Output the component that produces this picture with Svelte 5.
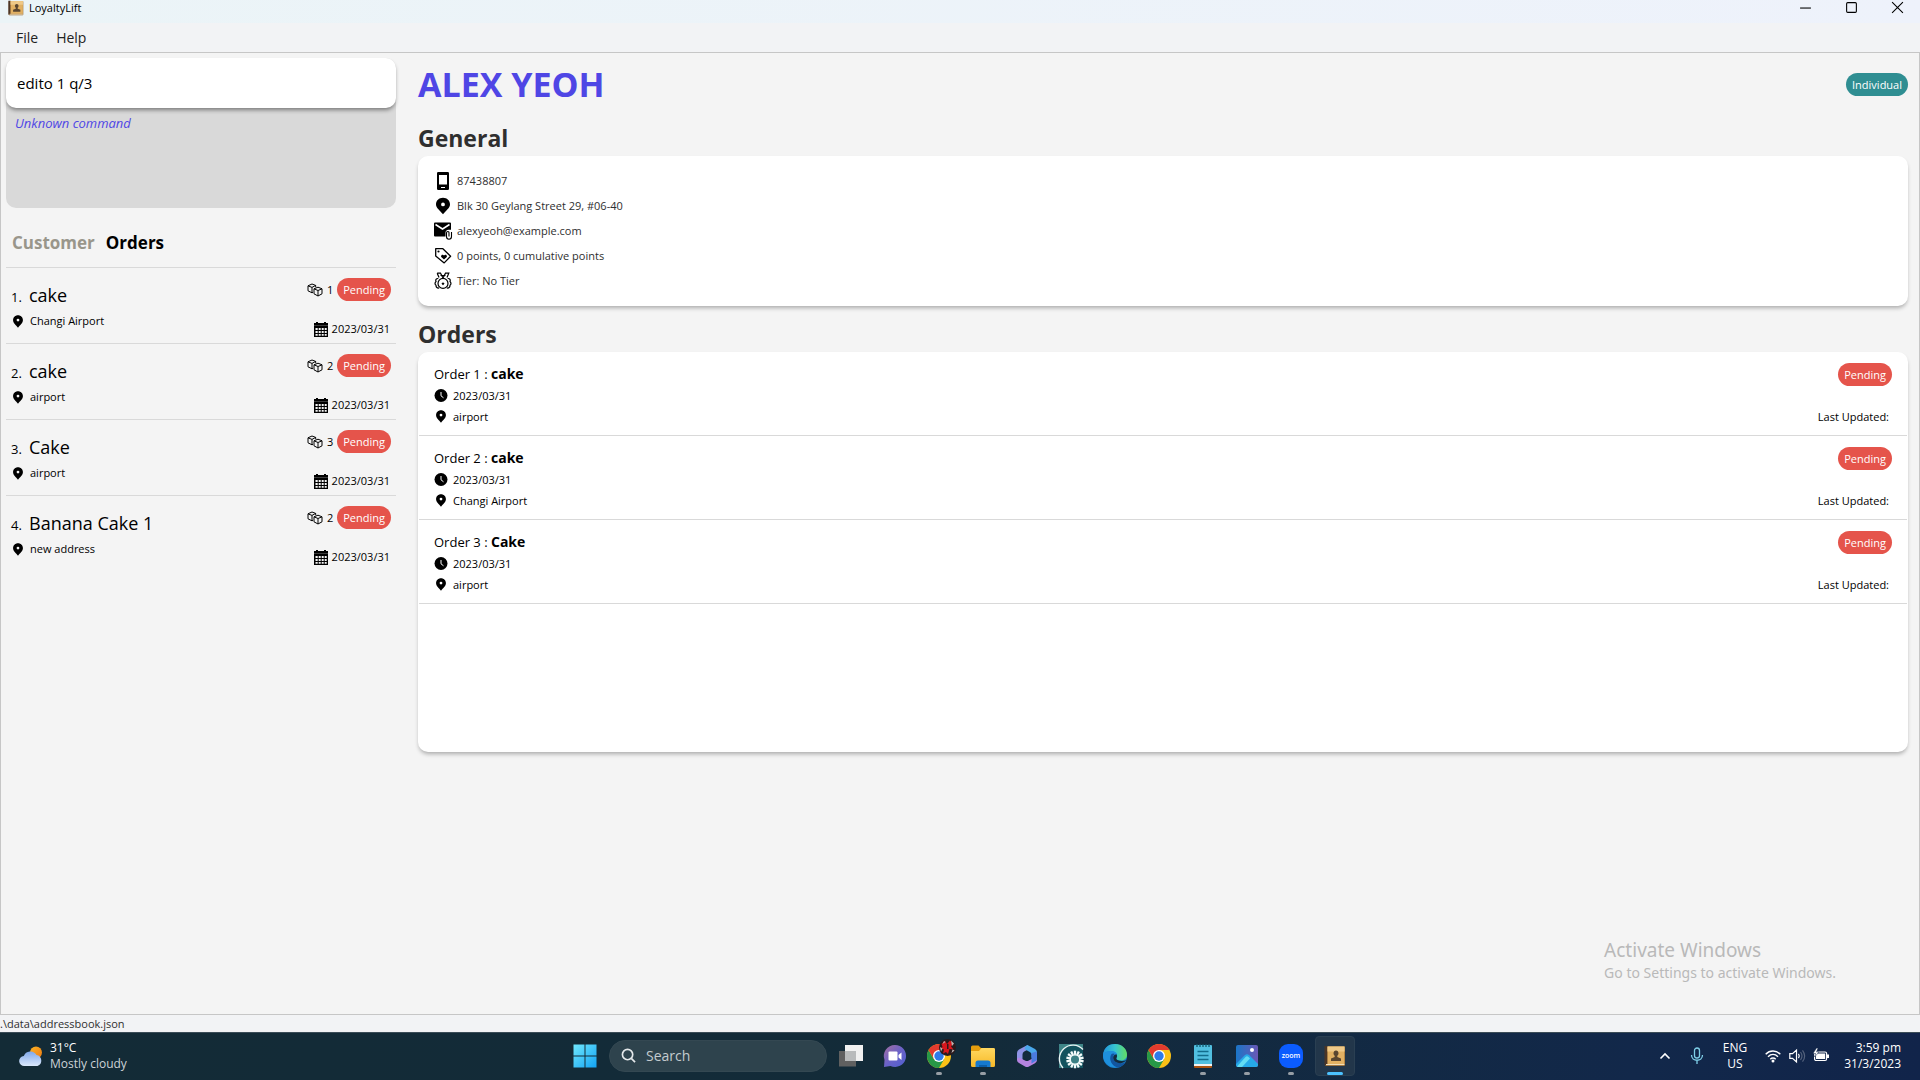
<script>
  const orders = [
    { name: 'cake', address: 'Changi Airport', qty: 1, date: '2023/03/31' },
    { name: 'cake', address: 'airport', qty: 2, date: '2023/03/31' },
    { name: 'Cake', address: 'airport', qty: 3, date: '2023/03/31' },
    { name: 'Banana Cake 1', address: 'new address', qty: 2, date: '2023/03/31' }
  ];
  const customerOrders = [
    { name: 'cake', address: 'airport', date: '2023/03/31' },
    { name: 'cake', address: 'Changi Airport', date: '2023/03/31' },
    { name: 'Cake', address: 'airport', date: '2023/03/31' }
  ];
  const details = [
    { icon: 'phone', text: '87438807' },
    { icon: 'pin', text: 'Blk 30 Geylang Street 29, #06-40' },
    { icon: 'mail', text: 'alexyeoh@example.com' },
    { icon: 'tag', text: '0 points, 0 cumulative points' },
    { icon: 'medal', text: 'Tier: No Tier' }
  ];
  const apps = [
    { id: 'taskview', label: 'Task view' },
    { id: 'chat', label: 'Chat' },
    { id: 'chrome-profile', label: 'Google Chrome profile', state: 'open' },
    { id: 'explorer', label: 'File Explorer', state: 'open' },
    { id: 'm365', label: 'Microsoft 365' },
    { id: 'gear', label: 'Device utility' },
    { id: 'edge', label: 'Microsoft Edge' },
    { id: 'chrome', label: 'Google Chrome' },
    { id: 'notepad', label: 'Notepad', state: 'open' },
    { id: 'photos', label: 'Photos', state: 'open' },
    { id: 'zoom', label: 'Zoom', state: 'open' },
    { id: 'book', label: 'LoyaltyLift', state: 'active' }
  ];
  const spokes = Array.from({ length: 14 }, (_, i) => (i * 360) / 14);
  let command = $state('edito 1 q/3');
</script>

{#snippet pin()}
  <svg class="pin" viewBox="0 0 12 14" aria-hidden="true">
    <path fill-rule="evenodd" d="M6 .4C2.9.4.7 2.7.7 5.6c0 3.2 3.1 5.1 5.3 8 2.2-2.9 5.3-4.8 5.3-8C11.3 2.7 9.1.4 6 .4ZM6 4a1.500 1.500 0 1 1 0 3 1.500 1.500 0 0 1 0-3Z" />
  </svg>
{/snippet}

{#snippet book()}
  <svg viewBox="0 0 22 22" aria-hidden="true">
    <rect x="1" y="1.5" width="20" height="19.5" rx="1" fill="#8a5a24" />
    <rect x="0.5" y="1" width="3" height="19" fill="#4a3526" />
    <rect x="3.5" y="1.5" width="17" height="17.5" fill="#e2b163" />
    <rect x="3.5" y="1.5" width="17" height="5" fill="#efc988" />
    <rect x="2" y="19" width="18.5" height="1.2" fill="#f1dfb9" />
    <path d="M12 5.500c1.500 0 2.500 1.200 2.500 2.700 0 1.100-.5 2-1.200 2.600v1.200l3.700 1.500v2.500H7v-2.500l3.700-1.500v-1.200c-.7-.6-1.200-1.500-1.200-2.600 0-1.500 1-2.700 2.500-2.700Z" fill="#5a4630" />
  </svg>
{/snippet}

{#snippet chromeMark()}
  <circle cx="12" cy="12" r="12" fill="#fbc116" />
  <path d="M1.600 6A12 12 0 0 0 12 24l5.200-9L12 12 6.800 15Z" fill="#279847" />
  <path d="M12 6h10.400A12 12 0 0 0 1.600 6l5.200 9Z" fill="#e33b2e" />
  <circle cx="12" cy="12" r="6" fill="#fff" />
  <circle cx="12" cy="12" r="4.700" fill="#2f7bea" />
{/snippet}

{#snippet detailIcon(id)}
  <svg class="detail-icon" viewBox="0 0 18 18" aria-hidden="true">
    {#if id === 'phone'}
      <path fill-rule="evenodd" d="M4.200 0h9.600Q15 0 15 1.200v15.600q0 1.200-1.200 1.200H4.200Q3 18 3 16.800V1.200Q3 0 4.200 0ZM5 3v9.500h8V3ZM7 15v1h4v-1Z" />
    {:else if id === 'pin'}
      <path fill-rule="evenodd" d="M9 .8C5 .8 2 3.600 2 7.400c0 3.600 4.200 6 7 9.900 2.800-3.900 7-6.300 7-9.900C16 3.600 13 .8 9 .8ZM9 5.500a1.900 1.900 0 1 1 0 3.800 1.900 1.900 0 0 1 0-3.800Z" />
    {:else if id === 'mail'}
      <path d="M1 .500h15q1 0 1 1v6.200h-2.500q-3 .3-3 3V14.500H1q-1 0-1-1v-12q0-1 1-1Z" />
      <path d="M1.500 2.500 8.500 7 15.500 2.500" fill="none" stroke="#fff" stroke-width="1.500" />
      <path d="M17.500 10v4.500q0 2.700-2.500 2.700t-2.500-2.700V11q0-1.500 1.300-1.500T15 11v3.500" fill="none" stroke="#000" stroke-width="1.100" />
    {:else if id === 'tag'}
      <path d="M1.700 1.700h7.200l7.700 7.600L10.200 15.900 1.700 8.900Z" fill="none" stroke="#000" stroke-width="1.300" stroke-linejoin="round" />
      <circle cx="4.500" cy="4.500" r="1.100" />
      <path d="M10 12.600 7.200 9.900c-.7-1.800 1.500-3 2.800-1.500 1.300-1.500 3.500-.3 2.800 1.500Z" />
    {:else}
      <g fill="none" stroke="#000" stroke-width="1.200">
        <path d="M3.200 1.200h3.300L9 6l2.500-4.800h3.300L13 5.500M3.200 1.200 5 5.500M6.500 3.500h5" />
        <path d="M4.300 6.500C2 6.300 1.300 8 2 9.500c-1.300 1.200-1.300 2.800 0 3.700-.1 2.200 1.300 3.200 3.200 2.700M13.700 6.500C16 6.300 16.700 8 16 9.500c1.300 1.200 1.300 2.800 0 3.700.1 2.200-1.300 3.200-3.200 2.700" />
        <circle cx="9" cy="11.400" r="5" />
      </g>
      <path d="m9 9.700.5 1.200 1.200.2-.9.900.2 1.200L9 12.600l-1 .600.2-1.200-.9-.9 1.200-.2Z" />
    {/if}
  </svg>
{/snippet}

{#snippet appIcon(id)}
  {#if id === 'book'}
    {@render book()}
  {:else}
    <svg viewBox="0 0 24 24" aria-hidden="true">
      {#if id === 'taskview'}
        <rect x="0" y="7" width="17" height="15.5" fill="#606060" />
        <rect x="6" y="1" width="18" height="16" fill="#f1f1f1" />
        <rect x="6" y="7" width="11" height="10" fill="#b9bbbc" />
      {:else if id === 'chat'}
        <path d="M12 1a11 11 0 1 1-4.500 21L1 23l.5-7A11 11 0 0 1 12 1Z" fill="url(#chat)" />
        <rect x="5.500" y="7.500" width="9" height="9" rx="1" fill="#fff" />
        <path d="m15.500 11 3-2.500v7.500l-3-2.500Z" fill="#fff" />
      {:else if id === 'chrome-profile'}
        {@render chromeMark()}
        <circle cx="20.500" cy="3.500" r="8.500" fill="#2b1a1c" />
        <path d="M14.500 0l3.500-3 2 3 3-3.500 3 3-2 3 2.500 3-4-.5-1.500 5-2-2-3 1.500 1-4-3.500-1 2-1.500Z" fill="#d8161c" />
        <path d="M24-3.500l3 3-2 2.500ZM13 3l2.500 1.500-1.500 3ZM25.500 5.500l2 1-3 2.500ZM17-3l1.500 1-3 2Z" fill="#b9b4b4" />
        <path d="M20 0h1.500v5H20Z" fill="#2b1a1c" />
      {:else if id === 'explorer'}
        <path d="M0 3q0-1.500 1.500-1.500h6L10 4h12.500Q24 4 24 5.500V10H0Z" fill="#e59e0e" />
        <path d="M0 7h8l2.500-3h12q1.500 0 1.500 1.500v16Q24 23 22.500 23h-21Q0 23 0 21.500Z" fill="url(#folder)" />
        <path d="M4.500 23v-4q0-2.500 2.500-2.500h10q2.500 0 2.500 2.500v4Z" fill="#1579cf" />
        <path d="M8 23v-2h8v2Z" fill="#0b5da8" />
      {:else if id === 'm365'}
        <path d="M12.500 1 4 5.500Q2 6.600 2 9v7l5.500 2.500V10.500q0-2 1.700-3L14 5Z" fill="#8f93e6" />
        <path d="M12.500 1 20 5q2 1.200 2 3.500v8l-5.500-3v-3q0-1.500-1.300-2.300L9.500 5q.500-3 3-4Z" fill="#4aa8ec" />
        <path d="M2 16q0-3 3-2l5 2.500q2 1 3.800 0L22 12v4q0 2-2 3.200L14 22.500q-2 1-4 0L4 19q-2-1.200-2-3Z" fill="#b583e0" />
        <path d="M16.500 9 22 7.500V16l-5.500 3.500Z" fill="#4b7be0" />
        <path d="m12 8 4 2.200v4L12 16.500l-4-2.300v-4Z" fill="#142b3d" />
      {:else if id === 'gear'}
        <rect width="24" height="24" fill="#3f8588" />
        <path d="M3 24A14 14 0 0 1 24 5.500V24Z" fill="#12525e" />
        <path d="M4 24A13.500 13.500 0 0 1 24 5.500" fill="none" stroke="#e8f4f4" stroke-width="1.400" />
        <g transform="translate(16 15.500)" stroke="#f4fbfb" stroke-width="2.300">
          {#each spokes as a}
            <path d="M0-5V-8.800" transform="rotate({a})" />
          {/each}
          <circle r="4.800" fill="#3a7f84" stroke-width="1.500" />
        </g>
      {:else if id === 'edge'}
        <circle cx="12" cy="12" r="12" fill="#1a86d4" />
        <path d="M0 11C1 3 6 0 12 0c7 0 12 5 12 10.500 0 4-3 6-6 6-4 0-5-1.500-4.500-2.500C15.500 10 12 7 8 7 4 7 1 8.500 0 11Z" fill="url(#edge)" />
        <path d="M0 12C0 8.500 4 7 8 7c3 0 5 1.300 6 3-2-.5-4 .5-4.500 3-.8 4 2 8 7 9.200A12 12 0 0 1 0 12Z" fill="#1e90dd" />
        <path d="M8.500 10C5 15 9 23 15.500 23.500 19 22.500 21.500 20.500 22.800 18c-1 .5-3 1.300-5 1.300-5 0-7.800-3-7.800-6 0-1.500.8-2.700 2-3.300q-2-.8-3.500 0Z" fill="#12559f" />
        <path d="M13.500 10.300q-3.500.5-3.300 3.700c.3 3 3.500 5.500 7.600 5.200 2.500-.2 4.700-1.700 5.700-3.200-2.500 1.200-6 1.300-8.500.2-1.500-.7-2-1.300-1.500-2.200q1.300-2 0-3.700Z" fill="#132b3d" />
      {:else if id === 'chrome'}
        {@render chromeMark()}
      {:else if id === 'notepad'}
        <rect x="3" y="1" width="18" height="21" rx="1" fill="#51bfe0" />
        <path d="M3 20h18v2H3Z" fill="#f2f2f2" />
        <path d="M3 22h18v1q0 1-1 1H4q-1 0-1-1Z" fill="#ad5310" />
        <path d="M6 0v3M9 0v3M12 0v3M15 0v3M18 0v3" stroke="#12586f" stroke-width="1.300" />
        <path d="M6.500 7.500h11M6.500 11.500h11M6.500 15.500h11" stroke="#126c8c" stroke-width="1.500" />
      {:else if id === 'photos'}
        <rect x="1" y="1" width="22" height="22" rx="2" fill="url(#photo)" />
        <path d="M1 20 10 11q2-1.700 4 0l9 9v1q0 2-2 2H3q-2 0-2-2Z" fill="#26a9e8" />
        <path d="M2 22.500 10.500 13q1.500-1.500 3 0l1.500 1.500L7 23H3Z" fill="#63dcf3" />
        <circle cx="17" cy="6" r="2" fill="#fff" />
      {:else if id === 'zoom'}
        <rect width="24" height="24" rx="9" fill="#0b5cff" />
        <text x="12" y="14" text-anchor="middle" class="zoom-text">zoom</text>
      {/if}
    </svg>
  {/if}
{/snippet}

<svg class="defs" aria-hidden="true">
  <defs>
    <linearGradient id="chat" x1="0" y1="0" x2="1" y2="1"><stop offset="0" stop-color="#a66f9f" /><stop offset=".5" stop-color="#6a62c8" /><stop offset="1" stop-color="#4f5fd0" /></linearGradient>
    <linearGradient id="folder" x1="0" y1="0" x2="0" y2="1"><stop offset="0" stop-color="#ffd860" /><stop offset="1" stop-color="#f7b928" /></linearGradient>
    <linearGradient id="edge" x1="0" y1="0" x2="1" y2="0"><stop offset="0" stop-color="#2193de" /><stop offset=".5" stop-color="#37c5d0" /><stop offset="1" stop-color="#62de62" /></linearGradient>
    <linearGradient id="photo" x1="0" y1="0" x2="1" y2="0"><stop offset="0" stop-color="#1a76c8" /><stop offset="1" stop-color="#6a58b5" /></linearGradient>
    <linearGradient id="win" x1="0" y1="0" x2="1" y2="1"><stop offset="0" stop-color="#70e8fd" /><stop offset="1" stop-color="#12a3f4" /></linearGradient>
    <linearGradient id="cloud" x1="0" y1="0" x2="0" y2="1"><stop offset="0" stop-color="#7fa8ea" /><stop offset="1" stop-color="#dbe8fb" /></linearGradient>
    <linearGradient id="sun" x1="0" y1="0" x2="1" y2="1"><stop offset="0" stop-color="#fbb324" /><stop offset="1" stop-color="#ee7a12" /></linearGradient>
  </defs>
</svg>

<div class="screen">
  <header class="titlebar">
    <span class="app-icon">{@render book()}</span>
    <span class="app-title">LoyaltyLift</span>
    <div class="window-buttons">
      <button aria-label="Minimize"><svg viewBox="0 0 12 12"><path d="M1 6.500h10" /></svg></button>
      <button aria-label="Maximize"><svg viewBox="0 0 12 12"><rect x="1.500" y="1.500" width="9" height="9" rx="1" /></svg></button>
      <button aria-label="Close"><svg viewBox="0 0 12 12"><path d="m1 1 10 10M11 1 1 11" /></svg></button>
    </div>
  </header>

  <nav class="menubar">
    <button>File</button>
    <button>Help</button>
  </nav>

  <main>
    <section class="sidebar">
      <div class="result-box">
        <input class="command" aria-label="Command" bind:value={command} />
        <p>Unknown command</p>
      </div>
      <div class="tabs" role="tablist">
        <button role="tab" aria-selected="false">Customer</button>
        <button role="tab" aria-selected="true">Orders</button>
      </div>
      <ol class="order-list">
        {#each orders as order, i}
          <li>
            <div class="order-main">
              <div class="order-name"><span class="index">{i + 1}.</span><span>{order.name}</span></div>
              <div class="order-address">{@render pin()}<span>{order.address}</span></div>
            </div>
            <div class="order-side">
              <div class="order-status">
                <svg class="boxes" viewBox="0 0 16 14" aria-hidden="true">
                  <path d="M1 2.800 5 1l3.700 1.400v1.800M1 2.800v5l4 2 1-.4M1 2.800l4 1.600 3.700-2M5 4.400v5.200M7 5.800 11 4.200l4 1.600v5L11 13l-4-2.200ZM7 5.800l4 1.700 4-1.700M11 7.500V13" />
                </svg>
                <span>{order.qty}</span>
                <span class="pill pending">Pending</span>
              </div>
              <div class="order-date">
                <svg class="calendar" viewBox="0 0 14 15" aria-hidden="true">
                  <path d="M0 1h2V0h2v1h6V0h2v1h2v14H0Z" />
                  <path d="M0 3.500h14" stroke="#777" stroke-width=".5" />
                  <path d="M1.500 6h2.200v2H1.500ZM4.700 6h2v2h-2ZM7.700 6h2v2h-2ZM10.700 6h2v2h-2ZM1.500 9h2.200v2H1.500ZM4.700 9h2v2h-2ZM7.700 9h2v2h-2ZM10.700 9h2v2h-2ZM1.500 12h2.200v1.700H1.500ZM4.700 12h2v1.700h-2ZM7.700 12h2v1.700h-2ZM10.700 12h2v1.700h-2Z" fill="#f4f4f4" />
                </svg>
                <time>{order.date}</time>
              </div>
            </div>
          </li>
        {/each}
      </ol>
    </section>

    <section class="content">
      <div class="customer-head">
        <h1>ALEX YEOH</h1>
        <span class="pill individual">Individual</span>
      </div>

      <h2>General</h2>
      <ul class="card details">
        {#each details as d}
          <li>{@render detailIcon(d.icon)}<span>{d.text}</span></li>
        {/each}
      </ul>

      <h2>Orders</h2>
      <ul class="card customer-orders">
        {#each customerOrders as order, i}
          <li>
            <div class="co-main">
              <div class="co-title">Order {i + 1} : <b>{order.name}</b></div>
              <div class="co-line">
                <svg class="clock" viewBox="0 0 13 13" aria-hidden="true"><circle cx="6.500" cy="6.500" r="6.500" /><path d="M6.500 3v3.800l2.500 2" fill="none" stroke="#fff" /></svg>
                <time>{order.date}</time>
              </div>
              <div class="co-line">{@render pin()}<span>{order.address}</span></div>
            </div>
            <div class="co-side">
              <span class="pill pending">Pending</span>
              <span class="updated">Last Updated:</span>
            </div>
          </li>
        {/each}
      </ul>
    </section>
  </main>

  <footer class="statusbar">.\data\addressbook.json</footer>

  <div class="taskbar">
    <div class="weather">
      <svg viewBox="0 0 24 20" aria-hidden="true">
        <circle cx="17" cy="6.500" r="6" fill="url(#sun)" />
        <path d="M5.500 20a5 5 0 0 1-.7-10A7 7 0 0 1 17.500 9a5.700 5.700 0 0 1 1 11Z" fill="url(#cloud)" />
      </svg>
      <div><span>31°C</span><span class="dim">Mostly cloudy</span></div>
    </div>

    <div class="apps">
      <button class="app" aria-label="Start">
        <svg viewBox="0 0 24 24"><path d="M.5.5h11v11H.5ZM12.500.5h11v11h-11ZM.5 12.500h11v11H.5ZM12.500 12.500h11v11h-11Z" fill="url(#win)" /></svg>
      </button>
      <label class="search">
        <svg viewBox="0 0 16 16" aria-hidden="true"><circle cx="7" cy="7" r="5.500" /><path d="m11 11 4 4" /></svg>
        <input type="search" placeholder="Search" aria-label="Search" />
      </label>
      {#each apps as app}
        <button class="app {app.state ?? ''}" aria-label={app.label}>{@render appIcon(app.id)}</button>
      {/each}
    </div>

    <div class="tray">
      <svg class="chevron" viewBox="0 0 12 12" aria-hidden="true"><path d="m1.500 8.500 4.500-4.500 4.500 4.500" fill="none" stroke="#fff" stroke-width="1.600" /></svg>
      <svg class="mic" viewBox="0 0 14 18" aria-hidden="true"><g fill="none" stroke="#7fcfe8" stroke-width="1.300"><rect x="4.500" y="1" width="5" height="10" rx="2.500" /><path d="M1.500 8c0 7 11 7 11 0M7 13.300V17" /></g></svg>
      <div class="lang"><span>ENG</span><span>US</span></div>
      <svg class="status" viewBox="0 0 16 16" aria-hidden="true"><g fill="none" stroke="#fff" stroke-width="1.400"><path d="M.7 6.200c4-4.200 10.600-4.200 14.600 0M3 8.800c3-3 7-3 10 0M5.300 11.200c1.600-1.600 3.800-1.600 5.400 0" /></g><circle cx="8" cy="13" r="1.500" fill="#fff" /></svg>
      <svg class="status" viewBox="0 0 16 16" aria-hidden="true"><g fill="none" stroke="#fff" stroke-width="1.200"><path d="M.8 5.700h2.700L7.500 2v12l-4-3.700H.8ZM9.500 5.800q1.500 2.200 0 4.400" /><path d="M11.500 4q3 4 0 8M13.500 2.300q4.300 5.700 0 11.400" stroke="#54627c" /></g></svg>
      <svg class="status" viewBox="0 0 16 16" aria-hidden="true"><rect x="1.600" y="4" width="12" height="8.500" rx="1.500" fill="none" stroke="#fff" stroke-width="1.200" /><path d="M3 5.500h9.200V11H3ZM14 6.500h2v3.500h-2Z" fill="#fff" /><path d="M3.500 0 0 5.500h2.500L1.500 9l4.500-5H3.500l1.500-4Z" fill="#fff" stroke="#12264a" stroke-width=".5" /></svg>
      <div class="clock-text"><span>3:59 pm</span><span>31/3/2023</span></div>
    </div>
  </div>

  <aside class="watermark">
    <strong>Activate Windows</strong>
    <span>Go to Settings to activate Windows.</span>
  </aside>
</div>

<style>
  :global(body) {
    margin: 0;
  }
  .screen {
    position: relative;
    display: flex;
    flex-direction: column;
    min-height: 100vh;
    overflow: hidden;
    background: #f2f3f5;
    color: #000;
    font-family: 'Open Sans', 'Noto Sans', sans-serif;
    font-size: 11px;
    line-height: 16px;
  }
  .defs {
    position: absolute;
    width: 0;
    height: 0;
  }
  svg {
    display: block;
    flex: none;
    overflow: visible;
  }
  button {
    padding: 0;
    border: 0;
    background: none;
    color: inherit;
    font: inherit;
  }
  ul,
  ol {
    margin: 0;
    padding: 0;
    list-style: none;
  }

  .titlebar {
    display: flex;
    align-items: center;
    height: 15px;
    padding: 0 16px 8px 8px;
    background: linear-gradient(90deg, #ebf4f7, #eef2fb);
  }
  .app-icon {
    width: 16px;
    margin-right: 5px;
  }
  .app-icon svg {
    width: 16px;
    height: 16px;
  }
  .window-buttons {
    display: flex;
    gap: 33px;
    margin-left: auto;
  }
  .window-buttons svg {
    width: 13px;
    height: 13px;
    fill: none;
    stroke: #000;
  }

  .menubar {
    display: flex;
    gap: 18px;
    padding: 5px 16px 4px;
    color: #222;
    font-size: 14px;
    line-height: 20px;
  }

  main {
    flex: 1;
    display: grid;
    grid-template-columns: minmax(300px, 390px) 1fr;
    gap: 22px;
    padding: 5px 11px 0 5px;
    border: 1px solid #c6c6c6;
    background: #f4f4f4;
  }
  .result-box {
    height: 150px;
    border-radius: 10px;
    background: #d9d9d9;
  }
  .command {
    display: block;
    box-sizing: border-box;
    width: 100%;
    height: 50px;
    padding: 0 11px;
    border: 0;
    border-radius: 10px;
    outline: 0;
    background: #fff;
    box-shadow: 0 3px 4px -1px rgba(0, 0, 0, 0.45);
    color: #000;
    font: 15px 'Open Sans', 'Noto Sans', sans-serif;
  }
  .result-box p {
    margin: 0;
    padding: 5px 9px;
    color: #4f46e5;
    font-size: 13px;
    font-style: italic;
    line-height: 20px;
  }
  .tabs {
    display: flex;
    gap: 11px;
    padding: 23px 6px 12px;
    font-size: 17px;
    font-weight: 700;
    line-height: 24px;
    color: #99968b;
  }
  .tabs [aria-selected='true'] {
    color: #000;
  }
  .order-list li {
    display: flex;
    justify-content: space-between;
    height: 59px;
    padding: 10px 5px 6px;
    border-top: 1px solid #d9d9d9;
  }
  .order-name {
    display: flex;
    align-items: baseline;
    padding-top: 5px;
    font-size: 18px;
    line-height: 24px;
  }
  .index {
    width: 18px;
    font-size: 13px;
  }
  .order-address {
    display: flex;
    align-items: center;
    gap: 6px;
    padding: 4px 0 0 1px;
  }
  .pin {
    width: 12px;
    height: 13px;
  }
  .order-side {
    display: flex;
    flex-direction: column;
    justify-content: space-between;
    align-items: flex-end;
  }
  .order-status,
  .order-date {
    display: flex;
    align-items: center;
    gap: 4px;
  }
  .order-date {
    padding-right: 1px;
  }
  .boxes {
    width: 16px;
    height: 14px;
    fill: none;
    stroke: #000;
    stroke-width: 1;
  }
  .calendar {
    width: 14px;
    height: 15px;
  }
  .pill {
    padding: 0 6px;
    border-radius: 12px;
    color: #fff;
    font-size: 11px;
    line-height: 23px;
  }
  .pending {
    background: #e5544b;
  }
  .individual {
    background: #2f8e92;
  }

  .customer-head {
    display: flex;
    justify-content: space-between;
    align-items: center;
    padding: 2px 0;
  }
  h1 {
    margin: 0;
    color: #4f46e5;
    font-size: 34px;
    line-height: 48px;
  }
  h2 {
    margin: 0;
    padding: 11px 0 1px;
    color: #2f2f2f;
    font-size: 23px;
    line-height: 34px;
  }
  .card {
    border-radius: 10px;
    background: #fff;
    box-shadow: 0 3px 4px -1px rgba(0, 0, 0, 0.3);
  }
  .details {
    display: flex;
    flex-direction: column;
    gap: 7px;
    padding: 16px;
    color: #2f2f2f;
  }
  .details li {
    display: flex;
    align-items: center;
    gap: 5px;
    height: 18px;
  }
  .detail-icon {
    width: 18px;
    height: 18px;
  }
  .customer-orders {
    min-height: 400px;
  }
  .customer-orders li {
    display: flex;
    justify-content: space-between;
    margin: 0 1px;
    padding: 11px 15px 8px;
    border-bottom: 1px solid #d9d9d9;
  }
  .co-title {
    font-size: 13px;
    line-height: 22px;
  }
  .co-title b {
    font-size: 14px;
  }
  .co-line {
    display: flex;
    align-items: center;
    gap: 5px;
    height: 21px;
  }
  .co-line svg {
    width: 14px;
    height: 13px;
  }
  .co-side {
    display: flex;
    flex-direction: column;
    justify-content: space-between;
    align-items: flex-end;
  }
  .updated {
    padding: 0 3px 2px 0;
  }

  .statusbar {
    height: 17px;
    color: #2f2f2f;
    line-height: 18px;
  }

  .taskbar {
    display: grid;
    grid-template-columns: 1fr auto 1fr;
    align-items: center;
    height: 45px;
    padding-bottom: 2px;
    border-top: 1px solid #3b4c57;
    background: linear-gradient(90deg, #132b36, #132b39 50%, #12284a 85%, #11244a);
    color: #fff;
    font-size: 12px;
  }
  .weather {
    display: flex;
    gap: 7px;
    align-items: center;
    padding-left: 19px;
  }
  .weather svg {
    width: 24px;
    height: 20px;
  }
  .weather span,
  .lang span,
  .clock-text span {
    display: block;
  }
  .weather .dim {
    color: #ccd2d6;
  }
  .apps {
    display: flex;
    align-items: center;
    gap: 4px;
  }
  .app {
    position: relative;
    display: grid;
    place-items: center;
    box-sizing: border-box;
    width: 40px;
    height: 40px;
    border-radius: 4px;
  }
  .app svg {
    width: 24px;
    height: 24px;
  }
  .active {
    border: 1px solid #2a3f52;
    background: #22364a;
  }
  .active svg {
    width: 22px;
    height: 22px;
  }
  .open::after,
  .active::after {
    content: '';
    position: absolute;
    bottom: 1px;
    left: 50%;
    width: 6px;
    height: 3px;
    border-radius: 2px;
    background: #979ea5;
    transform: translateX(-50%);
  }
  .active::after {
    bottom: 0;
    width: 16px;
    background: #4cc2ff;
  }
  .zoom-text {
    fill: #fff;
    font-size: 7px;
    font-weight: 600;
  }
  .search {
    display: flex;
    align-items: center;
    gap: 10px;
    box-sizing: border-box;
    width: 218px;
    height: 32px;
    padding: 0 11px;
    border: 1px solid #344852;
    border-radius: 16px;
    background: #2e434d;
  }
  .search svg {
    width: 15px;
    height: 15px;
    fill: none;
    stroke: #e4e8ea;
    stroke-width: 1.8;
  }
  .search input {
    width: 100%;
    min-width: 0;
    padding: 0;
    border: 0;
    outline: 0;
    background: none;
    color: #fff;
    font: 14px 'Open Sans', 'Noto Sans', sans-serif;
  }
  .search input::placeholder {
    color: #c4cbcf;
    opacity: 1;
  }
  .tray {
    display: flex;
    justify-content: flex-end;
    align-items: center;
    gap: 8px;
    padding-right: 19px;
  }
  .chevron {
    width: 12px;
    height: 12px;
    margin-right: 11px;
  }
  .mic {
    width: 14px;
    height: 18px;
    margin-right: 11px;
  }
  .status {
    width: 16px;
    height: 16px;
  }
  .lang {
    margin-right: 10px;
    text-align: center;
    line-height: 16px;
  }
  .clock-text {
    margin-left: 7px;
    text-align: right;
  }

  .watermark {
    position: absolute;
    right: 84px;
    bottom: 97px;
    display: flex;
    flex-direction: column;
    color: #b9b9b9;
    font-family: 'Noto Sans', 'Open Sans', sans-serif;
    font-size: 14px;
    line-height: 20px;
  }
  .watermark strong {
    font-size: 19px;
    font-weight: 400;
    line-height: 26px;
  }
</style>
